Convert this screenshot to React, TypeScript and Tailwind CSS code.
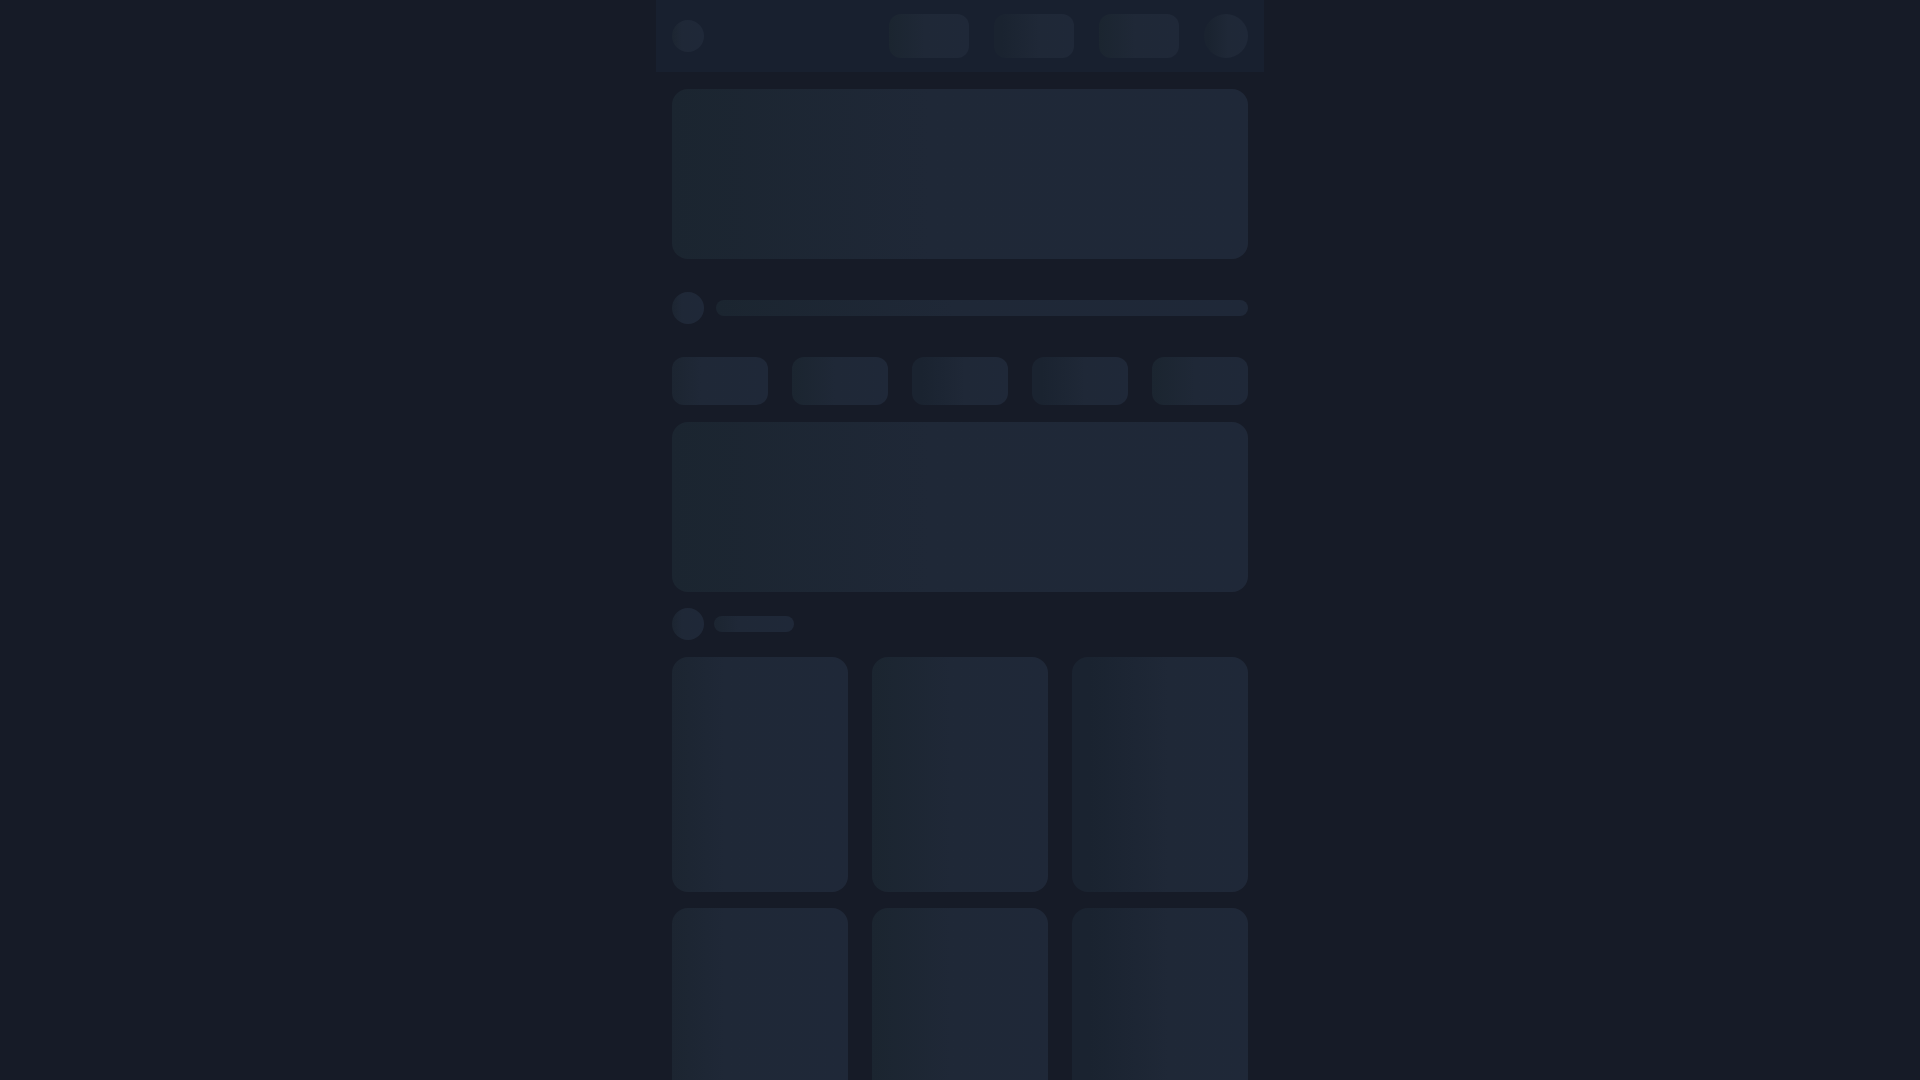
import React from "react";

const sk = "bg-linear-to-r from-[#1b2530] via-[#1f2837] via-45% to-[#1f2838]";
const skB = "bg-linear-to-r from-[#1c2531] via-[#1f2837] via-30% to-[#1f2838]";
const skC = "bg-linear-to-r from-[#1a2330] from-10% via-[#1f2837] via-55% to-[#1f2838]";

export default function App() {
  return (
    <div className="min-h-screen bg-[#161b27]" style={{ fontFamily: "Inter, 'Liberation Sans', sans-serif" }}>
      <div className="mx-auto w-[608px]">
        <header className="flex h-[72px] items-center justify-between bg-[#18202f] px-4">
          <div className={`h-8 w-8 rounded-full ${skB}`} />
          <div className="flex items-center gap-[25px]">
            <div className={`h-11 w-20 rounded-xl ${sk}`} />
            <div className={`h-11 w-20 rounded-xl ${skC}`} />
            <div className={`h-11 w-20 rounded-xl ${sk}`} />
            <div className={`h-11 w-11 rounded-full ${skC}`} />
          </div>
        </header>
        <main className="px-4 pt-[17px] pb-8">
          <div className={`h-[170px] rounded-2xl ${sk}`} />
          <div className="mt-[33px] flex items-center gap-3">
            <div className={`h-8 w-8 shrink-0 rounded-full ${skB}`} />
            <div className={`h-4 flex-1 rounded-full ${sk}`} />
          </div>
          <div className="mt-[33px] grid grid-cols-5 gap-6">
            <div className={`h-12 rounded-xl ${skB}`} />
            <div className={`h-12 rounded-xl ${sk}`} />
            <div className={`h-12 rounded-xl ${skC}`} />
            <div className={`h-12 rounded-xl ${skC}`} />
            <div className={`h-12 rounded-xl ${sk}`} />
          </div>
          <div className={`mt-[17px] h-[170px] rounded-2xl ${sk}`} />
          <div className="mt-4 flex items-center gap-2.5">
            <div className={`h-8 w-8 shrink-0 rounded-full ${skB}`} />
            <div className={`h-4 w-20 rounded-full ${skB}`} />
          </div>
          <div className="mt-[17px] grid grid-cols-3 gap-x-6 gap-y-4">
            <div className={`aspect-[3/4] rounded-2xl ${skB}`} />
            <div className={`aspect-[3/4] rounded-2xl ${sk}`} />
            <div className={`aspect-[3/4] rounded-2xl ${skC}`} />
            <div className={`aspect-[3/4] rounded-2xl ${skB}`} />
            <div className={`aspect-[3/4] rounded-2xl ${sk}`} />
            <div className={`aspect-[3/4] rounded-2xl ${skC}`} />
          </div>
        </main>
      </div>
    </div>
  );
}
